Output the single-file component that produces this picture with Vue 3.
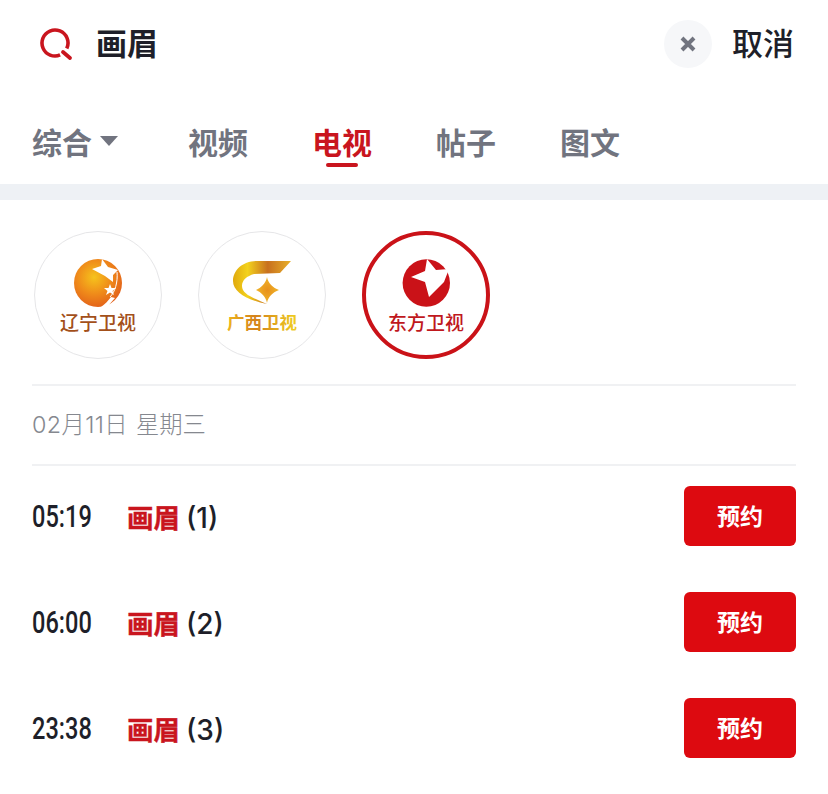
<script setup>
const tabs = [
  { label: '综合', caret: true },
  { label: '视频' },
  { label: '电视', active: true },
  { label: '帖子' },
  { label: '图文' }
]
const shows = [
  { time: '05:19', num: '(1)' },
  { time: '06:00', num: '(2)' },
  { time: '23:38', num: '(3)' }
]
</script>

<template>
  <div class="page">
    <header class="search">
      <svg class="search-icon" width="34" height="34" viewBox="0 0 34 34">
        <circle cx="15" cy="16" r="13" fill="none" stroke="#c9151e" stroke-width="3.6" stroke-dasharray="71.700 10" transform="rotate(67 15 16)" />
        <path d="M23 25 L30 31" fill="none" stroke="#c9151e" stroke-width="3.800" stroke-linecap="round" />
      </svg>
      <span class="query">画眉</span>
      <span class="clear">
        <svg width="18" height="18" viewBox="0 0 18 18">
          <path d="M3 3 L15 15 M15 3 L3 15" stroke="#71747f" stroke-width="4" fill="none" />
        </svg>
      </span>
      <span class="cancel">取消</span>
    </header>

    <nav class="tabs">
      <div v-for="tab in tabs" :key="tab.label" class="tab" :class="{ active: tab.active, caret: tab.caret }">
        {{ tab.label }}
        <svg v-if="tab.caret" class="caret-icon" width="18" height="10" viewBox="0 0 18 10">
          <path d="M0 0 H18 L9 10 Z" fill="#71747f" />
        </svg>
      </div>
    </nav>

    <div class="band"></div>

    <section class="channels">
      <div class="logo">
        <svg width="126" height="126" viewBox="0 0 126 126">
          <defs>
            <radialGradient id="ln" cx="0.42" cy="0.38" r="0.65">
              <stop offset="0" stop-color="#f6c31c" />
              <stop offset="0.55" stop-color="#ef8a1a" />
              <stop offset="1" stop-color="#e2601a" />
            </radialGradient>
          </defs>
          <circle cx="63" cy="51" r="24" fill="url(#ln)" />
          <path d="M67 27 L73 35 L83 38 L78 43 L78 50 L70 44 L57 37 L66 34 Z" fill="#fff" />
          <path d="M82 40 C83 50 80 60 75 65" fill="none" stroke="#fff" stroke-width="1" />
          <path d="M76 65 C73 69 70 72 66 75 L72 75 L80 66 Z" fill="#fff" />
          <path d="M75 52 L76.500 56 L81 56 L77.500 59 L79 63 L75 60.500 L71 63 L72.500 59 L69 56 L73.500 56 Z" fill="#fff" />
          <text x="63" y="98" text-anchor="middle" class="logo-text ln">辽宁卫视</text>
        </svg>
      </div>
      <div class="logo">
        <svg width="126" height="126" viewBox="0 0 126 126">
          <defs>
            <linearGradient id="gx" x1="0" y1="0" x2="1" y2="0">
              <stop offset="0" stop-color="#e0a90e" />
              <stop offset="0.25" stop-color="#f3d21c" />
              <stop offset="0.6" stop-color="#c8701e" />
              <stop offset="1" stop-color="#e8b02a" />
            </linearGradient>
            <radialGradient id="gs">
              <stop offset="0" stop-color="#e8901c" />
              <stop offset="1" stop-color="#efb52a" />
            </radialGradient>
            <linearGradient id="gt" x1="0" y1="0" x2="1" y2="0">
              <stop offset="0" stop-color="#eeb51c" />
              <stop offset="0.4" stop-color="#d4821c" />
              <stop offset="1" stop-color="#f0d020" />
            </linearGradient>
          </defs>
          <path d="M92 29 H58 C44 29 34 38 34 49 C34 60 48 68 68 72 C54 66 43 62 43 54 C43 48 48 44 55 42 L81 41 Z" fill="url(#gx)" />
          <path d="M68 45 C69 51 74 56 80 58 C74 60 69 65 68 71 C67 65 62 60 57 58 C62 56 67 51 68 45 Z" fill="url(#gs)" />
          <text x="63" y="97" text-anchor="middle" class="logo-text gxt" fill="url(#gt)">广西卫视</text>
        </svg>
      </div>
      <div class="logo selected">
        <svg width="126" height="126" viewBox="0 0 126 126">
          <circle cx="63.300" cy="51" r="23.700" fill="#ca1218" />
          <path d="M48 45 L62 39 L64 27 L73 38 L86 37 L81 50 L66 65 L62 50 Z" fill="#fff" />
          <text x="63" y="98" text-anchor="middle" class="logo-text df">东方卫视</text>
        </svg>
      </div>
    </section>

    <div class="date">02月11日<span class="weekday">星期三</span></div>

    <ul class="shows">
      <li v-for="show in shows" :key="show.time" class="show">
        <span class="time">{{ show.time }}</span>
        <span class="title"><b>画眉</b>{{ show.num }}</span>
        <button class="book">预约</button>
      </li>
    </ul>
  </div>
</template>

<style>
html, body { margin: 0; background: #fff; }
</style>

<style scoped>
.page {
  width: 828px;
  height: 794px;
  overflow: hidden;
  background: #fff;
  font-family: "Noto Sans CJK SC", "Liberation Sans", sans-serif;
  color: #1e1f29;
}
.search {
  display: flex;
  align-items: center;
  height: 88px;
  padding: 0 34px 0 40px;
}
.search-icon {
  flex: none;
}
.query {
  margin: 0 0 4px 22px;
  font-size: 31px;
  font-weight: 700;
  line-height: 40px;
}
.clear {
  display: flex;
  align-items: center;
  justify-content: center;
  width: 48px;
  height: 48px;
  margin-left: auto;
  border-radius: 50%;
  background: #f6f7f9;
}
.cancel {
  margin: 0 0 4px 20px;
  font-size: 31px;
  font-weight: 500;
  line-height: 40px;
}
.tabs {
  display: flex;
  height: 96px;
  padding-left: 32px;
}
.tab {
  position: relative;
  display: flex;
  align-items: center;
  height: 108px;
  margin-top: -1px;
  margin-right: 64px;
  font-size: 30px;
  font-weight: 700;
  color: #71747f;
}
.tab.caret {
  margin-right: 70px;
}
.caret-icon {
  margin-left: 8px;
}
.tab.active {
  color: #c9151e;
}
.tab.active::after {
  content: "";
  position: absolute;
  left: 14px;
  width: 32px;
  bottom: 28px;
  height: 4px;
  border-radius: 2px;
  background: #c9151e;
}
.band {
  height: 16px;
  background: #eef1f5;
}
.channels {
  display: flex;
  gap: 36px;
  margin: 0 32px;
  padding: 31px 2px 25px;
  border-bottom: 2px solid #f0f1f3;
}
.logo {
  width: 128px;
  height: 128px;
  box-sizing: border-box;
  border: 1px solid #e6e6e8;
  border-radius: 50%;
  display: flex;
  align-items: center;
  justify-content: center;
  overflow: hidden;
}
.logo.selected {
  border: 4px solid #ca1218;
}
.logo svg {
  flex: none;
}
.logo-text {
  font-family: "Noto Sans CJK SC", sans-serif;
  font-size: 19px;
  font-weight: 500;
}
.ln { fill: #a3501a; }
.gxt { font-size: 17.500px; font-weight: 700; }
.df { fill: #c0181d; }
.date {
  margin: 0 32px;
  height: 78px;
  line-height: 78px;
  font-family: "Inter", "Noto Sans CJK SC", sans-serif;
  font-size: 23.300px;
  font-weight: 300;
  letter-spacing: 0.4px;
  color: #85888f;
  border-bottom: 2px solid #f0f1f3;
}
.weekday {
  margin-left: 8px;
  letter-spacing: 0;
}
.shows {
  list-style: none;
  margin: 0;
  padding: 0 32px;
}
.show {
  display: flex;
  align-items: center;
  height: 60px;
  padding: 20px 0 26px;
}
.time {
  display: inline-block;
  width: 95px;
  font-family: "Roboto", sans-serif;
  font-size: 31px;
  font-weight: 500;
  transform: scaleX(0.76);
  transform-origin: left center;
}
.title {
  font-family: "Inter", "Noto Sans CJK SC", sans-serif;
  font-size: 28px;
  font-weight: 500;
}
.title b {
  margin-right: 6px;
  color: #c9151e;
  font-size: 26.500px;
  font-weight: 700;
  font-family: "Noto Sans CJK SC", sans-serif;
  -webkit-text-stroke: 0.4px #c9151e;
}
.book {
  width: 112px;
  height: 60px;
  margin-left: auto;
  border: none;
  border-radius: 6px;
  background: #dd0a10;
  color: #fff;
  font-family: "Noto Sans CJK SC", sans-serif;
  font-size: 23px;
  font-weight: 700;
  padding-bottom: 4px;
}
</style>
